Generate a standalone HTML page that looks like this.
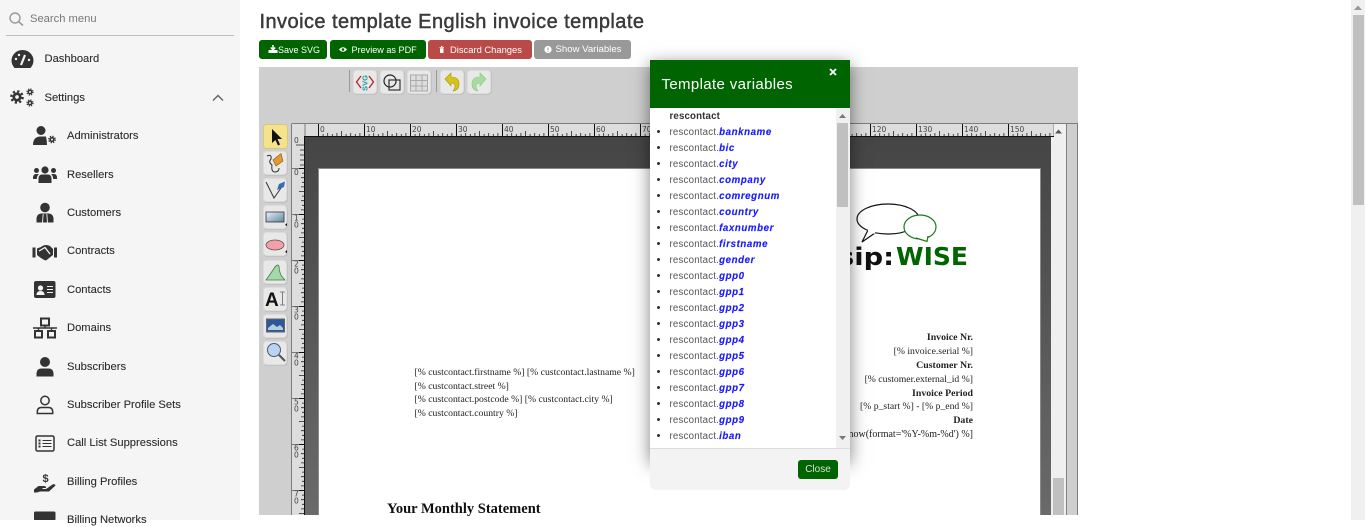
<!DOCTYPE html>
<html><head><meta charset="utf-8"><title>Invoice template</title>
<style>
html,body{margin:0;padding:0;width:1365px;height:520px;overflow:hidden;background:#fff;font-family:"Liberation Sans",sans-serif}
.a{position:absolute;white-space:nowrap}
.side{left:0;top:0;width:240px;height:520px;background:#f5f5f5}
.m{color:#2b2b2b;font-size:11.2px;line-height:14px;-webkit-text-stroke:.1px #2b2b2b}
.btn{top:40px;height:19px;line-height:20px;color:#fff;font-size:9.6px;border-radius:3px;box-sizing:border-box}
.s{font-family:"Liberation Serif",serif;font-size:9.7px;line-height:12px;color:#222}
.s b{font-size:9.85px}
.r{right:392px;text-align:right}
.li{left:669.5px;font-size:9.7px;line-height:16px;color:#555;letter-spacing:.2px}
.li b{color:#1a1aff;font-style:italic;letter-spacing:.6px;-webkit-text-stroke:.15px #1a1aff}
.dot{position:absolute;left:-13px;top:5px;width:3.4px;height:3.4px;border-radius:50%;background:#333}
</style></head><body>
<div class="a side"></div>
<svg class="a" style="left:0;top:0" width="240" height="520" viewBox="0 0 240 520">
<defs>
<g id="g"><circle r=".85" fill="#333"/><circle r="1.05" fill="none" stroke="#333" stroke-width=".42" stroke-dasharray=".41 .415"/><circle r=".34" fill="#f5f5f5"/></g>
</defs>
<circle cx="15" cy="18" r="5" fill="none" stroke="#9a9a9a" stroke-width="1.4"/><path d="M19 22l4 3.5" stroke="#9a9a9a" stroke-width="1.6"/>
<path d="M6 35.500H234" stroke="#bdbdbd" stroke-width="1"/>
<path d="M14.500 68Q11.500 64.500 11.500 60.500A11 10.500 0 0 1 33.500 60.500Q33.500 64.500 30.500 68Z" fill="#333"/>
<path d="M21 65L25 55" stroke="#f5f5f5" stroke-width="2.200"/><circle cx="16" cy="59" r="1.200" fill="#f5f5f5"/><circle cx="19" cy="55" r="1.200" fill="#f5f5f5"/><circle cx="29" cy="60" r="1.200" fill="#f5f5f5"/>
<use href="#g" transform="translate(17 97) scale(5.400)"/><use href="#g" transform="translate(30 92) scale(2.900)"/><use href="#g" transform="translate(30 103) scale(2.900)"/>
<path d="M213 100.500L218 95.500L223 100.500" fill="none" stroke="#666" stroke-width="1.500"/>
<g fill="#333">
<circle cx="41" cy="130.500" r="4.500"/><path d="M33 145Q33 137 40 136.500L46 136.500Q47 141 47 145Z"/>
<use href="#g" transform="translate(52 139.500) scale(3.100)"/>
<circle cx="45" cy="170" r="3.600"/><circle cx="36.500" cy="170.500" r="2.500"/><circle cx="53.500" cy="170.500" r="2.500"/>
<path d="M38.500 183V178Q39 174.500 42 174.500H48Q51 174.500 51.500 178V183Z"/><path d="M33 178Q33 174 36 174H39Q37 175.500 36.800 179H33ZM57 178Q57 174 54 174H51Q53 175.500 53.200 179H57Z"/>
<circle cx="45" cy="207.500" r="4.800"/><path d="M36.500 222.500V218Q37 214 41 213.500H49Q53 214 53.500 218V222.500Z"/><path d="M43.200 214L42.500 222.500M46.800 214L47.500 222.500" stroke="#f5f5f5" stroke-width=".9"/>
<path d="M32.500 247.500h3v10h-3zM54 247.500h3v10h-3z"/><path d="M37 248.500L41 247Q45 243.500 50 246L53 249V255L46 260.500Q43 260 37 255Z"/><path d="M39 251L45 247.500L50 254" fill="none" stroke="#f5f5f5" stroke-width="1.300"/>
<rect x="34" y="281" width="21.500" height="17" rx="2"/>
<circle cx="40.500" cy="288" r="2.600" fill="#f5f5f5"/><path d="M36.500 295q0-4 4-4t4 4z" fill="#f5f5f5"/><path d="M47 286.500h6M47 289.500h6M47 292.500h6" stroke="#f5f5f5" stroke-width="1.100"/>
<path d="M41 318.500h8v7h-8zM35 331h7v6.500h-7zM48 331h7v6.500h-7z" fill="none" stroke="#333" stroke-width="2"/><path d="M33 328h24M45 325v3M38.500 328v3M51.500 328v3" stroke="#333" stroke-width="1.400"/>
<circle cx="45" cy="362" r="5"/><path d="M36.500 376.500V373Q37 368.500 41.500 368.500H48.500Q53 368.500 53.500 373V376.500Z"/>
<circle cx="45" cy="400.500" r="4.200" fill="none" stroke="#333" stroke-width="1.500"/><path d="M37.300 413.500V411.500Q37.500 407.500 41.500 407.500H48.500Q52.500 407.500 52.700 411.500V413.500Z" fill="none" stroke="#333" stroke-width="1.500"/>
<rect x="36" y="436" width="18" height="15" rx="1.500" fill="none" stroke="#333" stroke-width="1.500"/><path d="M38.500 439.500h2v2h-2zM38.500 442.500h2v2h-2zM38.500 445.500h2v2h-2zM42.500 440h9v1h-9zM42.500 443h9v1h-9zM42.500 446h9v1h-9z"/>
<text x="45.500" y="482" font-family="Liberation Sans" font-size="11" font-weight="bold" text-anchor="middle">$</text>
<path d="M34 489.500L38.500 486H43.500Q46.500 486 46 488H42.500V489H46L52.500 484.500Q55 483.500 55.500 485.500L49 491.500H40L37 492.500H34Z"/>
<rect x="34" y="511.500" width="21.500" height="9" rx="1.500"/>
</g></svg>
<div class="a m" style="left:30px;top:12px;color:#777;font-size:11.2px;-webkit-text-stroke:0">Search menu</div>
<div class="a m" style="left:44.500px;top:52px">Dashboard</div>
<div class="a m" style="left:44.500px;top:91px">Settings</div>
<div class="a m" style="left:67px;top:129px">Administrators</div>
<div class="a m" style="left:67px;top:168px">Resellers</div>
<div class="a m" style="left:67px;top:206px">Customers</div>
<div class="a m" style="left:67px;top:244px">Contracts</div>
<div class="a m" style="left:67px;top:283px">Contacts</div>
<div class="a m" style="left:67px;top:321px">Domains</div>
<div class="a m" style="left:67px;top:360px">Subscribers</div>
<div class="a m" style="left:67px;top:398px">Subscriber Profile Sets</div>
<div class="a m" style="left:67px;top:436px">Call List Suppressions</div>
<div class="a m" style="left:67px;top:475px">Billing Profiles</div>
<div class="a m" style="left:67px;top:513px">Billing Networks</div>

<div class="a" style="left:259.500px;top:10px;font-size:20px;line-height:24px;color:#3a3a3a;letter-spacing:.44px;-webkit-text-stroke:.45px #3a3a3a">Invoice template English invoice template</div>

<div class="a btn" style="left:259px;width:68px;background:#006400;padding-left:19px;font-size:9px">Save SVG</div>
<div class="a btn" style="left:330px;width:96px;background:#006400;padding-left:21.500px;font-size:9.1px">Preview as PDF</div>
<div class="a btn" style="left:428px;width:104px;background:#b94a48;padding-left:22px;font-size:9.4px">Discard Changes</div>
<div class="a btn" style="left:534px;width:97px;background:#999;padding-left:21.500px">Show Variables</div>
<svg class="a" style="left:259px;top:40px" width="372" height="19" viewBox="259 40 372 19">
<path d="M273 45v4.500M270.800 47.500l2.200 2.400 2.200-2.400" stroke="#fff" stroke-width="1.500" fill="none"/><path d="M268.500 50h9v3h-9z" fill="#fff"/>
<path d="M339 49.500q4-4.500 8 0q-4 4.500-8 0z" fill="#fff"/><circle cx="343" cy="49.500" r="1.300" fill="#006400"/>
<path d="M439.500 47h4.500v.8h-4.500zM440 48.200h3.500v4.800h-3.500zM441 46h1.500v1h-1.500z" fill="#fff"/>
<circle cx="548" cy="49.500" r="3.600" fill="#fff"/><path d="M548 47.500v2.500M548 50.800v.9" stroke="#999" stroke-width="1"/>
</svg>

<svg class="a" style="left:259px;top:67px" width="819" height="448" viewBox="259 67 819 448">
<defs>
<linearGradient id="cv" x1="0" y1="0" x2="0" y2="1"><stop offset="0" stop-color="#454545"/><stop offset="1" stop-color="#6a6a6a"/></linearGradient>
<linearGradient id="rc" x1="0" y1="0" x2="1" y2="1"><stop offset="0" stop-color="#eef"/><stop offset="1" stop-color="#5a8a9a"/></linearGradient>
<pattern id="hr" patternUnits="userSpaceOnUse" x="318" y="124" width="46" height="12">
<path d="M.500 0V12" stroke="#111"/><path d="M5.100 10V12M9.700 9V12M14.300 10V12M18.900 9V12M23.500 7V12M28.100 10V12M32.700 9V12M37.300 10V12M41.900 9V12" stroke="#222" stroke-width=".8"/></pattern>
<pattern id="vr" patternUnits="userSpaceOnUse" x="292" y="168" width="13" height="46">
<path d="M0 .5H13" stroke="#777"/><path d="M7 .5H13" stroke="#111"/><path d="M10 5.100H13M9 9.700H13M10 14.300H13M9 18.900H13M7 23.500H13M10 28.100H13M9 32.700H13M10 37.300H13M9 41.900H13" stroke="#222" stroke-width=".8"/></pattern>
<g id="b"><rect x=".5" y=".5" width="24" height="24" rx="3" fill="#b5b5b5"/><rect x=".5" y=".5" width="23" height="23" rx="3" fill="#e8e8e8" stroke="#dcdcdc"/></g>
</defs>
<rect x="259" y="67" width="819" height="448" fill="#cfcfcf"/>
<path d="M349.500 70v22M436.500 70v22" stroke="#999"/>
<use href="#b" x="353" y="70"/><use href="#b" x="380" y="70"/><use href="#b" x="407" y="70"/><use href="#b" x="440" y="70"/><use href="#b" x="467" y="70"/>
<path d="M361 76L356.500 82L361 88M369 76L373.500 82L369 88" fill="none" stroke="#b22" stroke-width="1.300"/>
<text x="0" y="0" transform="translate(367.500 91) rotate(-90)" font-family="Liberation Sans" font-size="7.500" font-weight="bold" fill="#1a9a9a" textLength="16">SVG</text>
<circle cx="390" cy="81" r="6" fill="none" stroke="#222" stroke-width="1.200"/><rect x="389" y="80" width="11" height="10" fill="none" stroke="#333" stroke-width="1.200"/>
<path d="M410.500 75h17v16h-17zM416 75v16M422 75v16M410.500 80.500h17M410.500 86h17" fill="#ddd" stroke="#aaa" stroke-width="1"/>
<path d="M445 79L451 73V77Q459 77 459 84Q459 90 453 91Q456 87 454.500 84.500Q453.500 83 451 83V86Z" fill="#d8c218" stroke="#a89510" stroke-width=".6"/>
<path d="M486 79L480 73V77Q472 77 472 84Q472 90 478 91Q475 87 476.500 84.500Q477.500 83 480 83V86Z" fill="#a6dca0" stroke="#8cc488" stroke-width=".6"/>

<rect x="305" y="136" width="746" height="379" fill="url(#cv)"/>
<rect x="318.500" y="168.500" width="722" height="360" fill="#fff" stroke="#8a8a8a"/>
<rect x="292" y="124" width="762" height="12.500" fill="#ddd"/>
<rect x="318" y="124" width="736" height="12" fill="url(#hr)"/>
<rect x="292" y="136" width="13" height="379" fill="#ddd"/>
<rect x="292" y="168" width="13" height="347" fill="url(#vr)"/>
<path d="M292 123.500H1078M291.500 123.500V515M305 124V136.500M1054 124V136.500M1066.500 123.500V515M1077.500 123.500V515" stroke="#7d7d7d"/>
<path d="M305 136.500H1054M304.500 136V515" stroke="#111"/>
<path d="M296 145H305M300 150H305M300 155H305M300 160H305M300 165H305" stroke="#222" stroke-width=".8"/>
<rect x="1051" y="137" width="15" height="378" fill="#efefef"/><rect x="1054" y="124" width="12" height="13" fill="#efefef"/>
<rect x="1053" y="478" width="11" height="37" fill="#c0c0c0"/>
<path d="M1055 133.500h7l-3.500-4z" fill="#555"/>
<g font-family="DejaVu Sans,sans-serif" font-size="7.500" fill="#444">
<text x="320" y="132">0</text><text x="366" y="132">10</text><text x="412" y="132">20</text><text x="458" y="132">30</text><text x="504" y="132">40</text><text x="550" y="132">50</text><text x="596" y="132">60</text><text x="642" y="132">70</text><text x="872" y="132">120</text><text x="918" y="132">130</text><text x="964" y="132">140</text><text x="1010" y="132">150</text>
<text x="294" y="143">0</text><text x="294" y="175">0</text>
<text x="294" y="220.500">1</text><text x="294" y="227.500">0</text>
<text x="294" y="266.500">2</text><text x="294" y="273.500">0</text>
<text x="294" y="312.500">3</text><text x="294" y="319.500">0</text>
<text x="294" y="358.500">4</text><text x="294" y="365.500">0</text>
<text x="294" y="404.500">5</text><text x="294" y="411.500">0</text>
<text x="294" y="450.500">6</text><text x="294" y="457.500">0</text>
<text x="294" y="496.500">7</text><text x="294" y="503.500">0</text>
</g>

<rect x="263.500" y="124.500" width="24" height="24" rx="3" fill="#f5e28c" stroke="#d9c878"/>
<use href="#b" x="263" y="151"/><use href="#b" x="263" y="178"/><use href="#b" x="263" y="205"/><use href="#b" x="263" y="232"/><use href="#b" x="263" y="260"/><use href="#b" x="263" y="287"/><use href="#b" x="263" y="314"/><use href="#b" x="263" y="341"/>
<path d="M272 129V143L275.500 140L278 145.500L280 144.500L277.500 139H282Z" fill="#111"/>
<path d="M267 156Q272 154 271 159Q268 162 272 165Q271 172 275 172Q279 172 279 168" fill="none" stroke="#333" stroke-width="1"/><path d="M276 166L273 160L281 153.500L283 161Z" fill="#e09a30" stroke="#8a5a10" stroke-width=".6"/>
<path d="M266 182L274 198L281 188" fill="none" stroke="#333" stroke-width="1"/><path d="M277 190L279 184L285 181.500L284 187Z" fill="#3a6ab0"/>
<rect x="266" y="212" width="18" height="10" fill="url(#rc)" stroke="#333" stroke-width=".8"/><path d="M285 225l2-2v3z" fill="#111"/>
<ellipse cx="275" cy="245" rx="9" ry="5" fill="#f5a0a8" stroke="#555" stroke-width=".8"/><path d="M285 252l2-2v3z" fill="#111"/>
<path d="M266 280L273 270Q277 263 279 266Q279 275 285 280Z" fill="#a5d8a8" stroke="#4a7a50" stroke-width=".8"/>
<text x="265" y="306" font-family="Liberation Sans" font-size="19" font-weight="bold" fill="#111">A</text><path d="M280 292h5M282.500 292v13M280 305h5" stroke="#666" stroke-width=".8" fill="none"/>
<rect x="266.500" y="319" width="18" height="13" fill="#2a5a9a" stroke="#666"/><path d="M268 328l5-4 4 3 3-2 3 3v2h-15z" fill="#b8cce0"/>
<circle cx="274" cy="350" r="6.500" fill="#b8d4f4" stroke="#556" stroke-width="1"/><path d="M279 355L285 361" stroke="#555" stroke-width="2"/>

<ellipse cx="888" cy="219" rx="31" ry="15" fill="#fff" stroke="#111" stroke-width="1.200"/>
<path d="M868 230L862 242L875 233" fill="#fff" stroke="#111" stroke-width="1.200"/>
<path d="M868 230L875 233" stroke="#fff" stroke-width="2"/>
<ellipse cx="920" cy="227" rx="16" ry="12" fill="#fff" stroke="#1d7a1d" stroke-width="1.200"/>
<path d="M916 238L927 241.500L928 236" fill="#fff" stroke="#1d7a1d" stroke-width="1.200"/><path d="M917 237L927 236" stroke="#fff" stroke-width="1.500"/>
<text x="838" y="265" font-family="DejaVu Sans,sans-serif" font-size="24" font-weight="bold" fill="#111" textLength="56" lengthAdjust="spacingAndGlyphs">sip:</text>
<text x="896" y="265" font-family="DejaVu Sans,sans-serif" font-size="25" font-weight="bold" fill="#006400" textLength="72" lengthAdjust="spacingAndGlyphs">WISE</text>
</svg>

<div class="a s" style="left:414.500px;top:367px">[% custcontact.firstname %] [% custcontact.lastname %]</div>
<div class="a s" style="left:414.500px;top:381px">[% custcontact.street %]</div>
<div class="a s" style="left:414.500px;top:394px">[% custcontact.postcode %] [% custcontact.city %]</div>
<div class="a s" style="left:414.500px;top:408px">[% custcontact.country %]</div>
<div class="a s r" style="top:332px"><b>Invoice Nr.</b></div>
<div class="a s r" style="top:346px">[% invoice.serial %]</div>
<div class="a s r" style="top:360px"><b>Customer Nr.</b></div>
<div class="a s r" style="top:374px">[% customer.external_id %]</div>
<div class="a s r" style="top:388px"><b>Invoice Period</b></div>
<div class="a s r" style="top:401px">[% p_start %] - [% p_end %]</div>
<div class="a s r" style="top:415px"><b>Date</b></div>
<div class="a s r" style="top:429px;font-size:10px">[% date_now(format='%Y-%m-%d') %]</div>
<div class="a s" style="left:387px;top:501px;font-size:14.500px;line-height:16px;font-weight:bold;color:#111">Your Monthly Statement</div>

<div class="a" style="left:650px;top:60px;width:200px;height:400px;box-shadow:0 4px 16px rgba(0,0,0,.5)"></div>
<div class="a" style="left:650px;top:448px;width:200px;height:42px;background:#f3f3f3;border-top:1px solid #ddd;box-sizing:border-box;border-radius:0 0 6px 6px"></div>
<div class="a" style="left:650px;top:60px;width:200px;height:48px;background:#006400"></div>
<div class="a" style="left:661.500px;top:76px;color:#fff;font-size:15px;line-height:18px;letter-spacing:.36px">Template variables</div>
<svg class="a" style="left:828px;top:67px" width="10" height="10"><path d="M2 2L8 8M8 2L2 8" stroke="#fff" stroke-width="1.800"/></svg>
<div class="a" style="left:650px;top:108px;width:200px;height:340px;background:#fff;overflow:hidden">
<div class="a" style="left:186px;top:0;width:14px;height:340px;background:#f0f0f0"></div>
<div class="a" style="left:187px;top:15px;width:11px;height:84px;background:#c0c0c0"></div>
<svg class="a" style="left:186px;top:0" width="14" height="340"><path d="M3 10h7l-3.500-4zM3 328h7l-3.500 4z" fill="#777"/></svg>
</div>
<div class="a li" style="top:109px;color:#333;font-weight:bold"><b style="font-style:normal;color:#333;letter-spacing:.15px;-webkit-text-stroke:0">rescontact</b></div>
<div class="a li" style="top:125px"><i class="dot"></i>rescontact.<b>bankname</b></div>
<div class="a li" style="top:141px"><i class="dot"></i>rescontact.<b>bic</b></div>
<div class="a li" style="top:157px"><i class="dot"></i>rescontact.<b>city</b></div>
<div class="a li" style="top:173px"><i class="dot"></i>rescontact.<b>company</b></div>
<div class="a li" style="top:189px"><i class="dot"></i>rescontact.<b>comregnum</b></div>
<div class="a li" style="top:205px"><i class="dot"></i>rescontact.<b>country</b></div>
<div class="a li" style="top:221px"><i class="dot"></i>rescontact.<b>faxnumber</b></div>
<div class="a li" style="top:237px"><i class="dot"></i>rescontact.<b>firstname</b></div>
<div class="a li" style="top:253px"><i class="dot"></i>rescontact.<b>gender</b></div>
<div class="a li" style="top:269px"><i class="dot"></i>rescontact.<b>gpp0</b></div>
<div class="a li" style="top:285px"><i class="dot"></i>rescontact.<b>gpp1</b></div>
<div class="a li" style="top:301px"><i class="dot"></i>rescontact.<b>gpp2</b></div>
<div class="a li" style="top:317px"><i class="dot"></i>rescontact.<b>gpp3</b></div>
<div class="a li" style="top:333px"><i class="dot"></i>rescontact.<b>gpp4</b></div>
<div class="a li" style="top:349px"><i class="dot"></i>rescontact.<b>gpp5</b></div>
<div class="a li" style="top:365px"><i class="dot"></i>rescontact.<b>gpp6</b></div>
<div class="a li" style="top:381px"><i class="dot"></i>rescontact.<b>gpp7</b></div>
<div class="a li" style="top:397px"><i class="dot"></i>rescontact.<b>gpp8</b></div>
<div class="a li" style="top:413px"><i class="dot"></i>rescontact.<b>gpp9</b></div>
<div class="a li" style="top:429px"><i class="dot"></i>rescontact.<b>iban</b></div>
<div class="a" style="left:798px;top:460px;width:40px;height:19px;line-height:20px;text-align:center;background:#006400;color:#ddd;font-size:10px;border-radius:3px">Close</div>

<div class="a" style="left:1351px;top:0;width:14px;height:520px;background:#f0f0f0"></div>
<div class="a" style="left:1353px;top:15px;width:11px;height:190px;background:#c0c0c0"></div>
<svg class="a" style="left:1351px;top:0" width="14" height="14"><path d="M3 10h8l-4-4.500z" fill="#999"/></svg>
</body></html>
